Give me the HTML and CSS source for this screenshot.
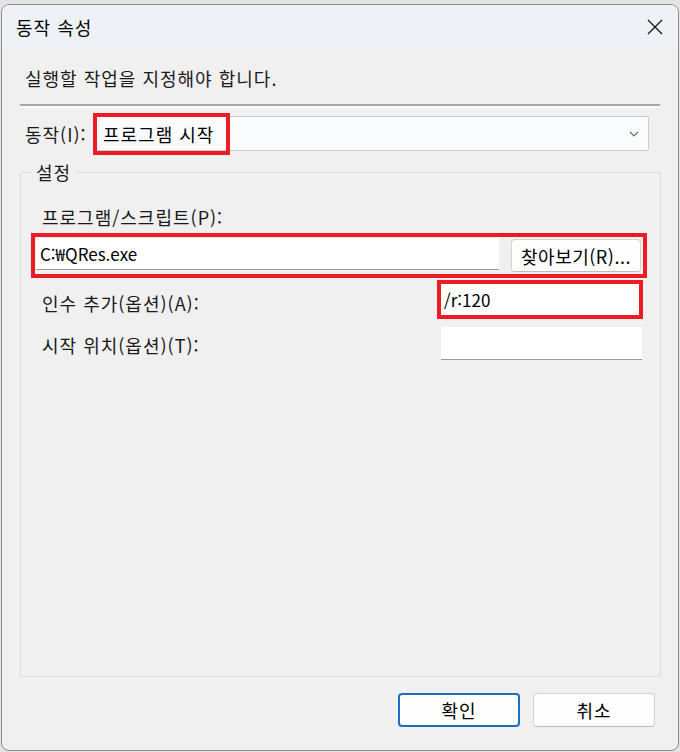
FILE: index.html
```html
<!DOCTYPE html>
<html lang="ko">

<head>
    <meta charset="UTF-8">
    <meta name="viewport" content="width=device-width, initial-scale=1.0">
    <title>동작 속성</title>
    <link rel="stylesheet" href="styles.css">
</head>

<body>
    <div class="dialog">
        <!-- Title bar -->
        <div class="titlebar">
            <span class="title">동작 속성</span>
            <svg class="close" width="16" height="16" viewBox="0 0 16 16">
                <path d="M1 1 L15 15 M15 1 L1 15" stroke="#1a1a1a" stroke-width="1.4" fill="none" />
            </svg>
        </div>

        <!-- Body -->
        <div class="content">
            <p class="prompt">실행할 작업을 지정해야 합니다.</p>
            <div class="separator"></div>

            <div class="action-row">
                <span class="label">동작(I):</span>
                <div class="combo">
                    <span class="combo-text">프로그램 시작</span>
                    <svg class="chevron" width="10" height="6" viewBox="0 0 10 6">
                        <path d="M1 1 L5 5 L9 1" stroke="#6b6b6b" stroke-width="1.1" fill="none" />
                    </svg>
                    <span class="mark mark-combo"></span>
                </div>
            </div>

            <fieldset class="group">
                <legend>설정</legend>

                <div class="field-label">프로그램/스크립트(P):</div>
                <div class="program-row marked">
                    <div class="input input-program">C:₩QRes.exe</div>
                    <button class="btn btn-browse">찾아보기(R)...</button>
                </div>

                <div class="arg-row">
                    <span class="field-label">인수 추가(옵션)(A):</span>
                    <div class="input input-args marked">/r:120</div>
                </div>

                <div class="arg-row arg-row-start">
                    <span class="field-label">시작 위치(옵션)(T):</span>
                    <div class="input input-start"></div>
                </div>
            </fieldset>

            <div class="buttons">
                <button class="btn btn-ok">확인</button>
                <button class="btn">취소</button>
            </div>
        </div>
    </div>
</body>

</html>
```

FILE: styles.css
```css
/* Global */
* {
    box-sizing: border-box;
}

body {
    margin: 0;
    background: #e4e4e4;
    font-family: "Noto Sans CJK KR", sans-serif;
    font-size: 18px;
    letter-spacing: 1px;
    color: #1a1a1a;
    overflow: hidden;
}

/* Dialog window */
.dialog {
    margin: 4px 0 0 1px;
    width: 678px;
    height: 747px;
    border: 1px solid #8c8c8c;
    border-radius: 8px;
    background: #f0f0f0;
    display: flex;
    flex-direction: column;
    overflow: hidden;
}

.titlebar {
    height: 44px;
    flex-shrink: 0;
    background: #eef2f6;
    display: flex;
    align-items: center;
    justify-content: space-between;
    padding: 0 15px 0 14px;
}

.title {
    color: #000;
}

/* Content */
.content {
    flex: 1;
    display: flex;
    flex-direction: column;
    padding: 0 17px 23px 18px;
}

.prompt {
    margin: 17px 0 0 5px;
    line-height: 24px;
}

.separator {
    margin-top: 14px;
    margin-right: 1px;
    height: 4px;
    border-top: 2px solid #a6a6a6;
    border-bottom: 2px solid #ffffff;
}

.action-row {
    margin-top: 8px;
    display: flex;
    align-items: center;
    padding-left: 5px;
    padding-right: 12px;
}

.label {
    width: 70px;
}

.combo {
    position: relative;
    flex: 1;
    height: 35px;
    background: #fafbfc;
    border: 1px solid #c9cdd2;
    border-radius: 2px;
    display: flex;
    align-items: center;
    justify-content: space-between;
    padding: 0 9px 0 7px;
}

.combo-text {
    color: #000;
}

/* Red highlight frames */
.mark {
    position: absolute;
    border: 4px solid #ed1c24;
}

.mark-combo {
    left: -3px;
    top: -4px;
    width: 137px;
    height: 42px;
}

.marked {
    outline: 4px solid #ed1c24;
}

/* Group box */
.group {
    flex: 1;
    margin: 9px 0 16px 0;
    padding: 0 17px 0 14px;
    border: 1px solid #dcdcdc;
    min-width: 0;
}

.group legend {
    margin-left: -3px;
    padding: 0 4px;
    line-height: 24px;
}

.field-label {
    display: block;
    line-height: 24px;
}

.group > .field-label {
    margin: 21px 0 0 7px;
}

.program-row {
    margin-top: 8px;
    display: flex;
    align-items: flex-start;
    padding: 1px 2px 2px 1px;
    gap: 12px;
}

.input {
    background: #ffffff;
    border-bottom: 1px solid #9a9a9a;
    padding: 0 4px;
    font-size: 17px;
    letter-spacing: 0;
    line-height: 31px;
    color: #000;
}

.input-program {
    flex: 1;
    height: 32px;
}

.arg-row {
    display: flex;
    align-items: flex-start;
    justify-content: space-between;
    margin-top: 10px;
    padding-left: 7px;
}

.arg-row .field-label {
    margin-top: 7px;
}

.arg-row .input-args {
    width: 198px;
    height: 31px;
    margin-right: 4px;
    border-bottom: none;
    padding-left: 3px;
}

.arg-row-start {
    margin-top: 12px;
}

.arg-row-start .field-label {
    margin-top: 6px;
}

.input-start {
    width: 201px;
    height: 33px;
    margin-right: 1px;
}

/* Buttons */
.btn {
    font-family: inherit;
    font-size: 18px;
    letter-spacing: 1px;
    color: #000;
    background: #fdfdfd;
    border: 1px solid #d2d2d2;
    border-bottom-color: #bdbdbd;
    border-radius: 4px;
    padding: 0;
}

.btn-browse {
    width: 130px;
    height: 33px;
    margin-top: 1px;
    letter-spacing: 0.5px;
}

.buttons {
    display: flex;
    justify-content: flex-end;
    gap: 13px;
    padding-right: 6px;
}

.buttons .btn {
    width: 122px;
    height: 34px;
}

.buttons .btn-ok {
    border: 2px solid #1b6ec2;
}
```
